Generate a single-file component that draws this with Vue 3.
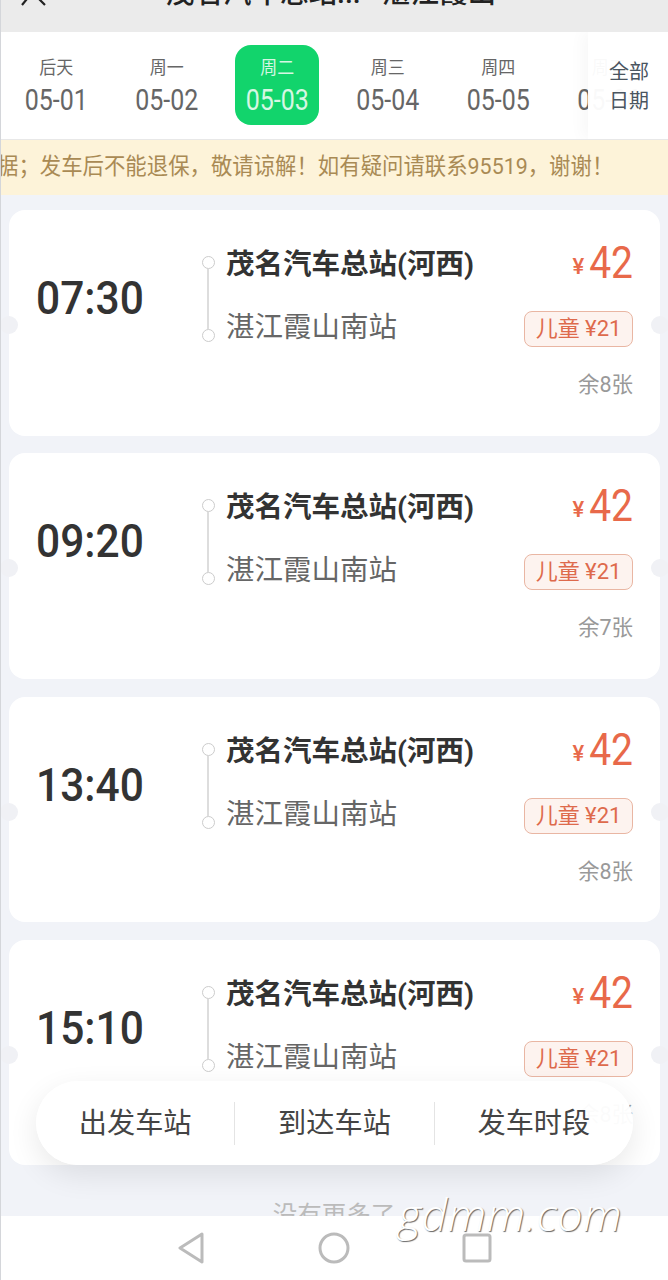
<script setup>
const dates = [
  { d: '后天', v: '05-01' },
  { d: '周一', v: '05-02' },
  { d: '周二', v: '05-03', on: true },
  { d: '周三', v: '05-04' },
  { d: '周四', v: '05-05' },
  { d: '周五', v: '05-06' }
]
const trips = [
  { t: '07:30', left: 8 },
  { t: '09:20', left: 7 },
  { t: '13:40', left: 8 },
  { t: '15:10', left: 8 }
]
</script>

<template>
  <div class="screen">
    <header class="head">
      <svg class="back" width="26" height="8" viewBox="0 0 26 8"><path d="M10 -6 L1 5 M13 -6 L24 5" fill="none" stroke="#222" stroke-width="2.2" /></svg>
      <div class="title">茂名汽车总站...&nbsp;&nbsp;&nbsp;湛江霞山</div>
    </header>

    <section class="dates">
      <div v-for="x in dates" :key="x.v" class="date" :class="{ on: x.on }">
        <span class="day">{{ x.d }}</span>
        <span class="val">{{ x.v }}</span>
      </div>
      <div class="all"><span>全部</span><span>日期</span></div>
    </section>

    <div class="notice"><span>据；发车后不能退保，敬请谅解！如有疑问请联系95519，谢谢！</span></div>

    <main class="list">
      <article v-for="x in trips" :key="x.t" class="card">
        <i class="notch l"></i><i class="notch r"></i>
        <div class="time">{{ x.t }}</div>
        <div class="line"><i class="dot"></i><i class="bar"></i><i class="dot"></i></div>
        <div class="stations">
          <div class="from">茂名汽车总站(河西)</div>
          <div class="to">湛江霞山南站</div>
        </div>
        <div class="right">
          <div class="price"><small>¥</small><b>42</b></div>
          <div class="child"><span>儿童 ¥21</span></div>
          <div class="left"><span>余{{ x.left }}张</span></div>
        </div>
      </article>
      <div class="more">没有更多了</div>
    </main>

    <nav class="sys">
      <svg width="30" height="32" viewBox="0 0 30 32"><path d="M26 2 L4 16 L26 30 Z" fill="none" stroke="#bbb" stroke-width="3" stroke-linejoin="round" /></svg>
      <svg width="32" height="32" viewBox="0 0 32 32"><circle cx="16" cy="16" r="14" fill="none" stroke="#bbb" stroke-width="3" /></svg>
      <svg width="30" height="32" viewBox="0 0 30 32"><rect x="2" y="3" width="26" height="26" rx="2" fill="none" stroke="#bbb" stroke-width="3" /></svg>
    </nav>

    <div class="filter">
      <span>出发车站</span><span>到达车站</span><span>发车时段</span>
    </div>
    <div class="mark">gdmm.com</div>
    <i class="edge"></i>
  </div>
</template>

<style>
html, body { margin: 0; padding: 0; }
</style>

<style scoped>
.screen {
  position: relative;
  width: 668px;
  height: 1280px;
  overflow: hidden;
  display: flex;
  flex-direction: column;
  background: #f1f3f8;
  font-family: Roboto, "Noto Sans CJK SC", sans-serif;
}
.edge {
  position: absolute;
  left: 0;
  top: 0;
  bottom: 0;
  width: 1px;
  background: #d4d6da;
}
.head {
  position: relative;
  flex: none;
  height: 32px;
  background: #ebebeb;
  overflow: hidden;
}
.back { position: absolute; left: 21px; top: 0; }
.title {
  margin-top: -23px;
  padding-right: 6px;
  text-align: center;
  font-size: 28.5px;
  line-height: 34px;
  color: #222;
  font-weight: 500;
  white-space: nowrap;
}
.dates {
  position: relative;
  flex: none;
  height: 107px;
  display: flex;
  padding-left: 1px;
  background: #fff;
  border-bottom: 1px solid #e8e8e8;
  overflow: hidden;
}
.date {
  flex: none;
  width: 110.5px;
  display: flex;
  flex-direction: column;
  align-items: center;
  position: relative;
  padding-top: 23px;
  color: #666;
  box-sizing: border-box;
}
.date.on { color: #d6f7e3; }
.date.on::before {
  content: "";
  position: absolute;
  left: 13px;
  top: 13px;
  width: 84px;
  height: 80px;
  border-radius: 16px;
  background: #12d46c;
}
.day { position: relative; font-size: 17px; line-height: 26px; transform: scaleY(1.05); }
.val { position: relative; font-size: 25px; line-height: 38px; margin-top: 1px; transform: scaleY(1.15); }
.all {
  position: absolute;
  right: 0;
  top: 0;
  bottom: 0;
  width: 80px;
  display: flex;
  flex-direction: column;
  justify-content: center;
  align-items: center;
  gap: 3px;
  padding: 2px 0 0 2px;
  box-sizing: border-box;
  font-size: 20px;
  line-height: 26px;
  color: #4a5560;
  background: rgba(255, 255, 255, .96);
  box-shadow: -6px 0 14px rgba(0, 0, 0, .03);
}
.notice {
  flex: none;
  height: 55px;
  display: flex;
  align-items: center;
  background: #fdf3d9;
  color: #a98a54;
  font-size: 21.4px;
  white-space: nowrap;
  overflow: hidden;
}
.notice span { display: inline-block; margin: -6px 0 0 -3px; transform: scaleY(1.05); }
.list {
  flex: 1;
  min-height: 0;
  overflow: hidden;
  padding: 15px 8px 0 9px;
  display: flex;
  flex-direction: column;
  gap: 17.7px;
}
.card {
  position: relative;
  flex: none;
  height: 225.6px;
  display: flex;
  align-items: flex-start;
  box-sizing: border-box;
  padding: 35px 27px 0 27px;
  background: #fff;
  border-radius: 16px;
}
.notch {
  position: absolute;
  top: 106px;
  width: 18px;
  height: 18px;
  border-radius: 50%;
  background: #f0f1f5;
}
.notch.l { left: -9px; }
.notch.r { right: -9px; }
.time {
  flex: none;
  width: 164px;
  margin-top: 29px;
  font-size: 42.5px;
  line-height: 50px;
  font-weight: 500;
  color: #333;
  transform: scaleY(1.1);
  transform-origin: left center;
}
.line {
  flex: none;
  width: 16px;
  height: 86px;
  margin-top: 11px;
  display: flex;
  flex-direction: column;
  align-items: center;
}
.dot {
  flex: none;
  box-sizing: border-box;
  width: 13px;
  height: 13px;
  border: 1.5px solid #ccc;
  border-radius: 50%;
}
.bar { flex: 1; width: 1.5px; background: #ddd; }
.stations { flex: 1; margin-left: 10px; }
.from {
  font-size: 28.5px;
  line-height: 40px;
  font-weight: 700;
  color: #333;
  white-space: nowrap;
}
.to {
  margin-top: 23px;
  font-size: 28.5px;
  line-height: 40px;
  color: #666;
  white-space: nowrap;
}
.right {
  flex: none;
  margin-top: -2px;
  display: flex;
  flex-direction: column;
  align-items: flex-end;
}
.price {
  height: 40px;
  display: flex;
  align-items: center;
  gap: 5px;
  color: #e8694a;
  line-height: 40px;
}
.price small { font-size: 22px; margin-top: 8px; font-weight: 500; }
.price b { font-size: 39px; font-weight: 400; display: inline-block; transform: scaleY(1.15); }
.child {
  margin-top: 28px;
  box-sizing: border-box;
  width: 109px;
  height: 36px;
  border: 1.5px solid #e9b6a3;
  border-radius: 8px;
  background: #fdf3ef;
  color: #de6a4c;
  font-size: 22px;
  line-height: 33px;
  text-align: center;
  white-space: nowrap;
}
.left {
  margin-top: 23px;
  font-size: 21.5px;
  line-height: 30px;
  color: #999;
}
.more {
  flex: none;
  margin-top: 16px;
  text-align: center;
  padding-right: 1px;
  font-size: 24.5px;
  line-height: 34px;
  color: #bbb;
}
.sys {
  position: relative;
  flex: none;
  height: 64px;
  display: flex;
  justify-content: center;
  align-items: center;
  gap: 112px;
  box-sizing: border-box;
  background: #fff;
}
.filter {
  position: absolute;
  left: 36px;
  top: 1081px;
  width: 597px;
  height: 84px;
  display: flex;
  align-items: center;
  border-radius: 42px;
  background: rgba(255, 255, 255, .96);
  box-shadow: 0 10px 30px rgba(0, 0, 0, .09);
  font-size: 28.2px;
  color: #444;
}
.filter span {
  flex: 1;
  height: 43px;
  line-height: 43px;
  text-align: center;
  border-left: 1.5px solid #e4e4e4;
}
.filter span:first-child { border-left: 0; }
.mark {
  position: absolute;
  left: 398px;
  top: 1184px;
  font-family: "Open Sans", sans-serif;
  font-style: italic;
  font-weight: 300;
  font-size: 45px;
  line-height: 60px;
  color: #fff;
  letter-spacing: .5px;
  text-shadow: 1px 1px 1px #666;
}
</style>
